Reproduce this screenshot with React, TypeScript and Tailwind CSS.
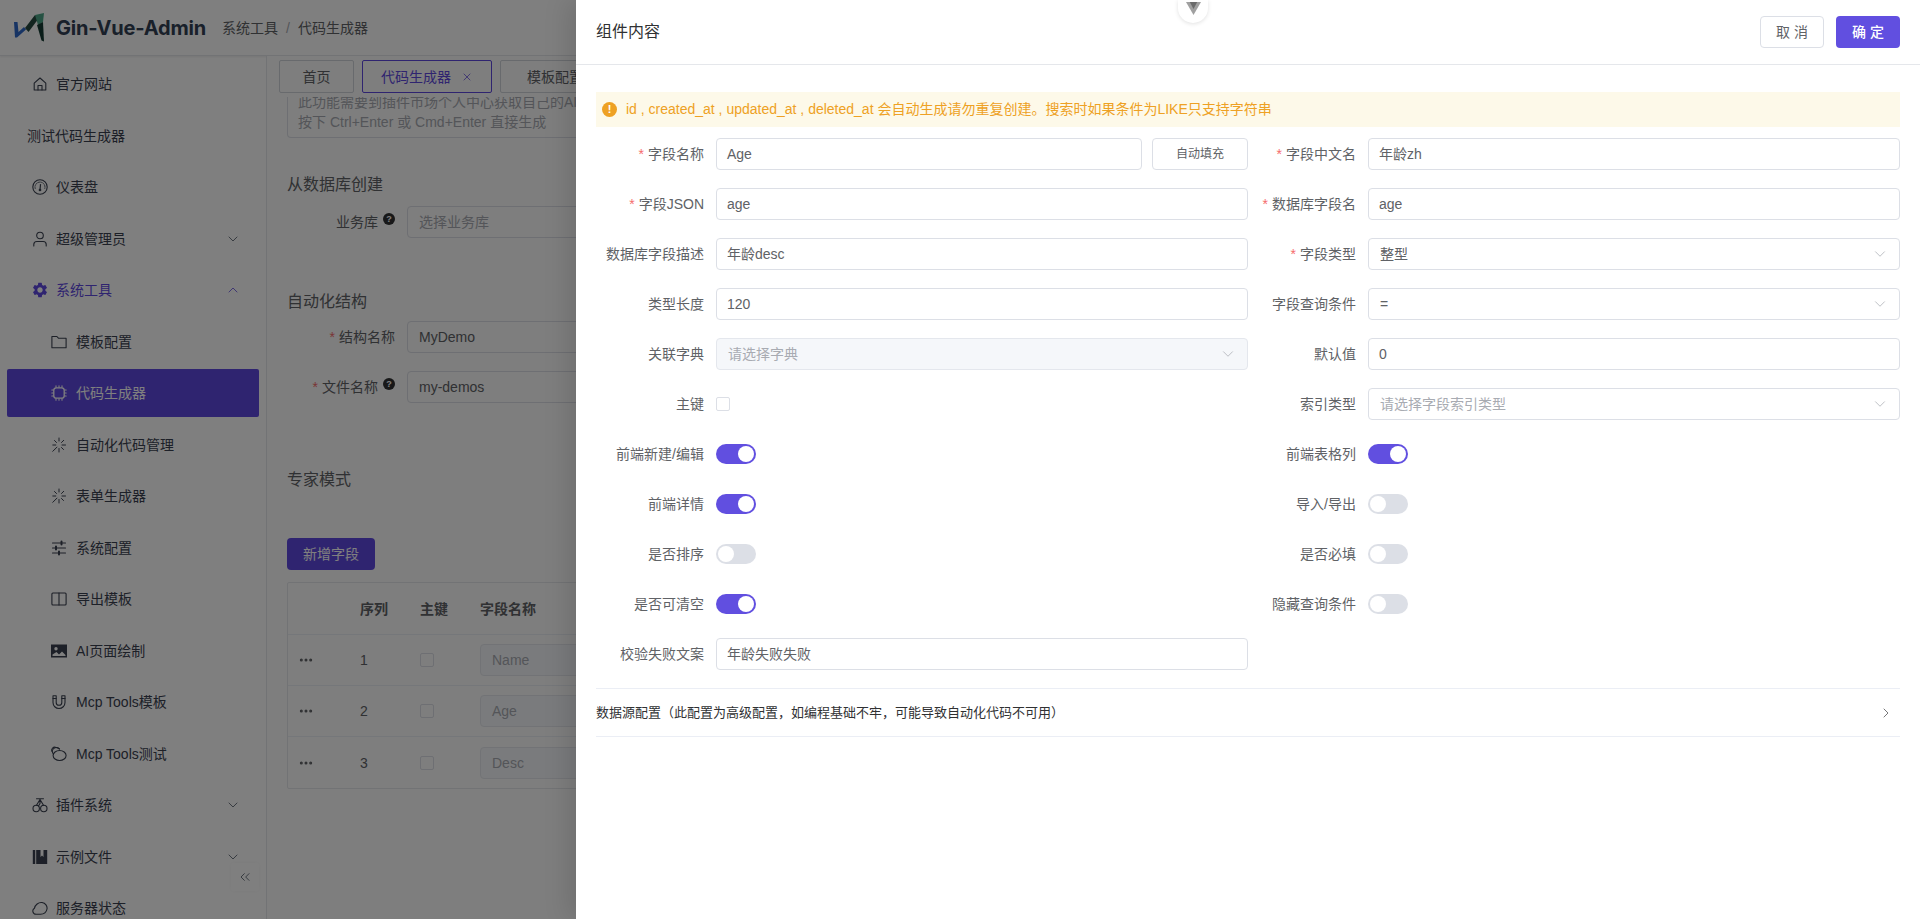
import React from "react";
import { MdSettings } from "react-icons/md";
import { ChevronDown, ChevronUp, ChevronRight, ChevronsLeft, X, Ellipsis } from "lucide-react";

const S = ({ children }: { children: React.ReactNode }) => (
  <svg viewBox="0 0 16 16" className="w-4 h-4 shrink-0" fill="none" stroke="currentColor" strokeWidth="1.1" strokeLinecap="round" strokeLinejoin="round">{children}</svg>
);
const House = () => <S><path d="M2.200 7.200 8 2l5.800 5.200V14H2.200z" /><path d="M6 14V9.500h4V14" /></S>;
const Odometer = () => <S><circle cx="8" cy="8" r="7.200" /><path d="M3.200 9.500A5 5 0 1 1 12.800 9.500" strokeWidth=".8" strokeDasharray="1.500 1" /><path d="M8.500 5.500 8 11" strokeWidth="1.200" /><circle cx="8" cy="11" r=".8" fill="currentColor" /></S>;
const UserI = () => <S><circle cx="8" cy="4.500" r="3.300" /><path d="M1.800 15v-1.500a3 3 0 0 1 3-3h6.400a3 3 0 0 1 3 3V15" /></S>;
const Folder = () => <S><path d="M.9 2.500h5l1.500 1.700h7.700v9.600H.9z" /></S>;
const Cpu = () => <S><rect x="2.800" y="2.800" width="10.400" height="10.400" rx="2.500" strokeWidth="1.300" /><path d="M5 .8v1.500M8 .8v1.500M11 .8v1.500M5 13.700v1.500M8 13.700v1.500M11 13.700v1.500M.8 5h1.500M.8 8h1.500M.8 11h1.500M13.700 5h1.500M13.700 8h1.500M13.700 11h1.500" /></S>;
const Spark = () => <S><path d="M8 1v3M8 11.500V15M1.800 8h3M11 8h3.500M3.500 3.500l2 2M12.700 3.300l-2.200 2.200M1.800 14.300l4.200-4.200M10.500 10.500l2 2" strokeWidth="1" /></S>;
const Sliders = () => <S><path d="M1.500 3h13M1.500 8h13M1.500 13h13" /><path d="M10.500 1.500v3M5 6.500v3M8 11.500v3" strokeWidth="2" /></S>;
const Book = () => <S><rect x=".9" y="2" width="14.200" height="12" rx="1" /><path d="M8 2v12" /></S>;
const Pic = () => <svg viewBox="0 0 16 16" className="w-4 h-4 shrink-0"><path fill="currentColor" fillRule="evenodd" d="M0 1.500h16v13H0zM1.500 11.500V13h13v-1l-3.500-3.500-3 3-2.500-2.500zM5 4a1.700 1.700 0 1 0 0 3.400A1.700 1.700 0 0 0 5 4z" /></svg>;
const Magnet = () => <S><path d="M2 1.800h3.200V8.500a2.800 2.800 0 0 0 5.600 0V1.800H14v6.700a6 6 0 0 1-12 0z" /><path d="M2 4.500h3.200M10.800 4.500H14" /></S>;
const Chat = () => <S><ellipse cx="8.600" cy="9.500" rx="6.500" ry="5" /><path d="M2.300 8A3.800 3.800 0 0 1 8.500 3" /><path d="M1 5.500A3 3 0 0 1 5 1.500 6 6 0 0 1 8.500 3" /></S>;
const Cherry = () => <S><circle cx="4.200" cy="11.500" r="3.200" /><circle cx="11.800" cy="11.500" r="3.200" /><path d="M4.500 8.300 8 2.500l3.500 5.800M8 2.500 8 6.500 6.500 9M4.500 1.800h7" /></S>;
const Collect = () => <svg viewBox="0 0 16 16" className="w-4 h-4 shrink-0"><path fill="currentColor" d="M.8 1h2.400v14H.8zM4.200 1h4.300v7l1.500-1.500L11.500 8V1h3.700v14H4.200z" /></svg>;
const Cloud = () => <S><path d="M4 14.200a3.200 3.200 0 0 1-1.500-6C3 5 6.500 2 10 2.500c3.500.5 5.500 3.500 5 6.500-.6 3.300-3.500 5.200-6.500 5.200z" /></S>;
const Gear = () => <MdSettings className="w-[18px] h-[18px] shrink-0 -mx-px" />;

type NavT = { label: string; icon?: React.ReactNode; sub?: boolean; caret?: "down" | "up"; active?: boolean; open?: boolean };
const nav: NavT[] = [
  { label: "官方网站", icon: <House /> },
  { label: "测试代码生成器" },
  { label: "仪表盘", icon: <Odometer /> },
  { label: "超级管理员", icon: <UserI />, caret: "down" },
  { label: "系统工具", icon: <Gear />, caret: "up", open: true },
  { label: "模板配置", icon: <Folder />, sub: true },
  { label: "代码生成器", icon: <Cpu />, sub: true, active: true },
  { label: "自动化代码管理", icon: <Spark />, sub: true },
  { label: "表单生成器", icon: <Spark />, sub: true },
  { label: "系统配置", icon: <Sliders />, sub: true },
  { label: "导出模板", icon: <Book />, sub: true },
  { label: "AI页面绘制", icon: <Pic />, sub: true },
  { label: "Mcp Tools模板", icon: <Magnet />, sub: true },
  { label: "Mcp Tools测试", icon: <Chat />, sub: true },
  { label: "插件系统", icon: <Cherry />, caret: "down" },
  { label: "示例文件", icon: <Collect />, caret: "down" },
  { label: "服务器状态", icon: <Cloud /> },
];

function NavItem({ n }: { n: NavT }) {
  const pl = n.sub ? "pl-[44px]" : n.icon ? "pl-[25px]" : "pl-[20px]";
  const tone = n.active ? "bg-[#5f49e0] text-white" : n.open ? "text-[#5f49e0]" : "text-[#3a4150]";
  return (
    <div className={`relative ml-[7px] mr-[7px] h-12 mb-[3.5px] shrink-0 flex items-center rounded-[2px] text-sm ${pl} ${tone}`}>
      {n.icon && <span className={n.sub ? "mr-[9px]" : "mr-2"}>{n.icon}</span>}
      <span>{n.label}</span>
      {n.caret === "down" && <ChevronDown className="absolute right-[18px] w-4 h-4 text-[#4b5563]" strokeWidth={1.2} />}
      {n.caret === "up" && <ChevronUp className="absolute right-[18px] w-4 h-4" strokeWidth={1.2} />}
    </div>
  );
}

function BgField({ label, req, help, value, ph }: { label: string; req?: boolean; help?: boolean; value?: string; ph?: string }) {
  return (
    <div className="flex items-center h-8 mb-[18px]">
      <div className="w-[120px] pr-3 flex justify-end items-center text-sm text-[#606266]">
        {req && <span className="text-[#f56c6c] mr-1">*</span>}
        <span>{label}</span>
        {help && <span className="ml-[5px] -mt-[6px] w-3 h-3 rounded-full bg-[#303133] text-white text-[9px] font-bold flex items-center justify-center">?</span>}
      </div>
      <div className={`w-[400px] h-8 border border-[#dcdfe6] rounded-[4px] px-[11px] flex items-center text-sm ${ph ? "text-[#a8abb2]" : "text-[#606266]"}`}>{value ?? ph}</div>
    </div>
  );
}

function Background() {
  return (
    <div className="isolate w-full h-full flex flex-col bg-white">
      <header className="h-14 shrink-0 flex items-center border-b border-[#e5e7eb] shadow-[0_1px_2px_rgba(0,0,0,.08)]">
        <svg viewBox="13 13 32 30" className="w-8 h-[30px] ml-[13px] shrink-0">
          <path fill="#2f68c8" d="M14 22h3.500l1 10 5.500-5 2 2.500-9 8h-2z" />
          <path fill="#25493f" d="M25 28 35 15l4 3-10.500 14z" />
          <path fill="#4ca586" d="M35 15 44 13l-1 9-5 3z" />
          <path fill="#143a33" d="M37 25l6-3 1 19.500-2.500-1z" />
        </svg>
        <div className="ml-[11px] text-xl font-bold text-[#334155] w-[151px] whitespace-nowrap font-['Inter'] tracking-[-0.01em]">Gin-Vue-Admin</div>
        <div className="ml-[15px] flex items-center text-sm text-[#606266] whitespace-nowrap">
          <span>系统工具</span><span className="mx-2 text-[#a8abb2]">/</span><span>代码生成器</span>
        </div>
      </header>
      <div className="flex-1 min-h-0 flex">
        <aside className="w-[267px] shrink-0 relative border-r border-[#e5e7eb] overflow-hidden">
          <div className="pt-[4px] flex flex-col">
            {nav.map((n) => <NavItem key={n.label} n={n} />)}
          </div>
          <div className="absolute left-[231px] top-[807px] w-7 h-7 flex items-center justify-center text-[#4b5563] rounded-[2px] shadow-[0_0_4px_rgba(0,0,0,.04)]">
            <ChevronsLeft className="w-4 h-4" strokeWidth={1.2} />
          </div>
        </aside>
        <main className="flex-1 min-w-0 bg-[#fcfcfc] overflow-hidden">
          <div className="relative z-10 h-[41px] bg-[#fcfcfc] pt-1 pl-[12px] flex gap-2 text-sm">
            <div className="w-[75px] h-[33px] border border-[#d1d5db] rounded-[2px] flex items-center justify-center text-[#606266]">首页</div>
            <div className="w-[130px] h-[33px] border border-[#5f49e0] rounded-[2px] flex items-center justify-center text-[#5f49e0] gap-[10px]">代码生成器<X className="w-3 h-3" strokeWidth={1.5} /></div>
            <div className="w-[110px] h-[33px] border border-[#d1d5db] rounded-[2px] flex items-center justify-center text-[#606266] shrink-0">模板配置</div>
          </div>
          <div className="ml-[20px] -mt-[8px] w-[900px] h-[49px] border border-t-0 border-[#dcdfe6] rounded-b-[4px] pl-[10px] pt-[3px] text-sm text-[#a8abb2] leading-[20px] overflow-hidden">
            <div className="whitespace-nowrap">此功能需要到插件市场个人中心获取自己的AI</div>
            <div className="whitespace-nowrap">按下 Ctrl+Enter 或 Cmd+Enter 直接生成</div>
          </div>
          <div className="ml-[20px] mt-[35px]">
            <div className="text-base leading-6 text-[#606266]">从数据库创建</div>
            <div className="mt-[9px]"><BgField label="业务库" help ph="选择业务库" /></div>
            <div className="text-base leading-6 text-[#606266] mt-[52px]">自动化结构</div>
            <div className="mt-[7px]">
              <BgField label="结构名称" req value="MyDemo" />
              <BgField label="文件名称" req help value="my-demos" />
            </div>
            <div className="text-base leading-6 text-[#606266] mt-[65px]">专家模式</div>
            <div className="mt-[46px] w-[88px] h-8 rounded-[4px] bg-[#5f49e0] text-white text-sm flex items-center justify-center">新增字段</div>
            <div className="mt-3 w-[900px] border border-[#e5e7eb] rounded-[2px] text-sm text-[#606266]">
              <div className="h-[52px] flex items-center border-b border-[#ebeef5] font-bold">
                <span className="w-[72px]" /><span className="w-[60px]">序列</span><span className="w-[60px]">主键</span><span>字段名称</span>
              </div>
              {[["1", "Name"], ["2", "Age"], ["3", "Desc"]].map(([a, b], i) => (
                <div key={a} className={`h-[51px] flex items-center ${i < 2 ? "border-b border-[#ebeef5]" : ""}`}>
                  <span className="w-[72px] pl-[10px]"><Ellipsis className="w-4 h-4" strokeWidth={2.5} /></span>
                  <span className="w-[60px]">{a}</span>
                  <span className="w-[60px]"><span className="block w-[14px] h-[14px] border border-[#dcdfe6] rounded-[2px]" /></span>
                  <span className="w-[300px] h-8 rounded-[4px] border border-[#e4e7ed] bg-[#f5f7fa] px-[11px] flex items-center text-[#a8abb2]">{b}</span>
                </div>
              ))}
            </div>
          </div>
        </main>
      </div>
    </div>
  );
}

function FormRow({ label, req, children }: { label: string; req?: boolean; children: React.ReactNode }) {
  return (
    <div className="flex items-center h-8 mb-[18px]">
      <div className="w-[120px] shrink-0 pr-3 flex justify-end text-sm text-[#606266] whitespace-nowrap">
        {req && <span className="text-[#f56c6c] mr-1">*</span>}
        <span>{label}</span>
      </div>
      <div className="flex-1 min-w-0 flex items-center">{children}</div>
    </div>
  );
}
const Input = ({ value }: { value: string }) => (
  <div className="flex-1 h-8 border border-[#dcdfe6] rounded-[4px] px-[10px] flex items-center text-sm text-[#606266]">{value}</div>
);
const Select = ({ value, ph, disabled }: { value?: string; ph?: string; disabled?: boolean }) => (
  <div className={`flex-1 h-8 border rounded-[4px] pl-[11px] pr-[10px] flex items-center justify-between text-sm ${disabled ? "bg-[#f5f7fa] border-[#e4e7ed]" : "border-[#dcdfe6]"} ${value ? "text-[#606266]" : "text-[#a8abb2]"}`}>
    <span>{value ?? ph}</span>
    <ChevronDown className="w-[18px] h-[18px] text-[#a8abb2]" strokeWidth={1} />
  </div>
);
const Switch = ({ on }: { on?: boolean }) => (
  <div className={`w-10 h-5 rounded-full p-[2px] flex ${on ? "bg-[#614fe0] justify-end" : "bg-[#dcdfe6] justify-start"}`}>
    <span className="w-4 h-4 rounded-full bg-white" />
  </div>
);

export default function App() {
  return (
    <div className="relative w-full h-screen overflow-hidden font-['Liberation_Sans','Noto_Sans_CJK_SC',sans-serif]">
      <Background />
      <div className="absolute inset-0 bg-black/50" />
      <div className="absolute right-0 top-0 bottom-0 w-[1344px] bg-white flex flex-col shadow-[-8px_0_24px_rgba(0,0,0,.12)]">
        <div className="h-[65px] shrink-0 border-b border-[#e5e7eb] pl-5 pr-5 flex items-center justify-between">
          <span className="text-base text-[#303133]">组件内容</span>
          <div className="flex gap-3">
            <div className="w-16 h-8 rounded-[4px] border border-[#dcdfe6] flex items-center justify-center text-sm text-[#606266]">取 消</div>
            <div className="w-16 h-8 rounded-[4px] bg-[#614fe0] flex items-center justify-center text-sm text-white font-medium">确 定</div>
          </div>
        </div>
        <div className="absolute left-[602px] top-0 w-[30px] h-[23px] rounded-b-full bg-white shadow-[0_1px_4px_rgba(0,0,0,.12)] flex justify-center pt-[1px]">
          <svg viewBox="0 0 14 14" className="w-[15px] h-[15px]">
            <path d="M0 1h14L7 13z" fill="#a0a0a0" />
            <path d="M3.500 1h7L7 7.500z" fill="#6b6b6b" />
          </svg>
        </div>
        <div className="px-5 pt-[27px] flex-1 min-h-0">
          <div className="h-[35px] mb-[11px] bg-[#fdf9e9] flex items-center pl-[6px] pb-[2px] text-sm text-[#eea124] whitespace-nowrap">
            <span className="w-[15px] h-[15px] mt-[2px] rounded-full bg-[#eea124] text-white text-[11px] font-bold flex items-center justify-center mr-[9px]">!</span>
            id , created_at , updated_at , deleted_at 会自动生成请勿重复创建。搜索时如果条件为LIKE只支持字符串
          </div>
          <div className="grid grid-cols-2">
            <FormRow label="字段名称" req>
              <Input value="Age" />
              <div className="ml-[10px] w-24 h-8 border border-[#dcdfe6] rounded-[4px] flex items-center justify-center text-xs text-[#606266]">自动填充</div>
            </FormRow>
            <FormRow label="字段中文名" req><Input value="年龄zh" /></FormRow>
            <FormRow label="字段JSON" req><Input value="age" /></FormRow>
            <FormRow label="数据库字段名" req><Input value="age" /></FormRow>
            <FormRow label="数据库字段描述"><Input value="年龄desc" /></FormRow>
            <FormRow label="字段类型" req><Select value="整型" /></FormRow>
            <FormRow label="类型长度"><Input value="120" /></FormRow>
            <FormRow label="字段查询条件"><Select value="=" /></FormRow>
            <FormRow label="关联字典"><Select ph="请选择字典" disabled /></FormRow>
            <FormRow label="默认值"><Input value="0" /></FormRow>
            <FormRow label="主键"><span className="w-[14px] h-[14px] border border-[#dcdfe6] rounded-[2px]" /></FormRow>
            <FormRow label="索引类型"><Select ph="请选择字段索引类型" /></FormRow>
            <FormRow label="前端新建/编辑"><Switch on /></FormRow>
            <FormRow label="前端表格列"><Switch on /></FormRow>
            <FormRow label="前端详情"><Switch on /></FormRow>
            <FormRow label="导入/导出"><Switch /></FormRow>
            <FormRow label="是否排序"><Switch /></FormRow>
            <FormRow label="是否必填"><Switch /></FormRow>
            <FormRow label="是否可清空"><Switch on /></FormRow>
            <FormRow label="隐藏查询条件"><Switch /></FormRow>
            <FormRow label="校验失败文案"><Input value="年龄失败失败" /></FormRow>
          </div>
          <div className="h-[49px] border-y border-[#ebeef5] flex items-center justify-between text-[13px] text-[#303133]">
            <span>数据源配置（此配置为高级配置，如编程基础不牢，可能导致自动化代码不可用）</span>
            <ChevronRight className="w-4 h-4 mr-[6px] text-[#303133]" strokeWidth={1} />
          </div>
        </div>
      </div>
    </div>
  );
}
